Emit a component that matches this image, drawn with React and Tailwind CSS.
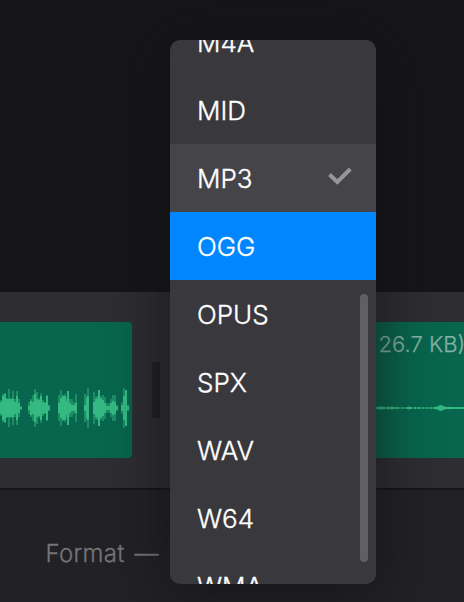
const formats = ["M4A", "MID", "MP3", "OGG", "OPUS", "SPX", "WAV", "W64", "WMA"];

// Each entry: x, peak half height, body half height
const speech = [
  [0, 8, 6], [2, 14, 12], [4, 15, 14], [6, 10, 9], [8, 19, 9], [10, 10, 9], [12, 17, 9], [14, 9, 6], [16, 17, 12], [18, 9, 5], [20, 2, 1],
  [28, 6, 2], [30, 9, 7], [32, 13, 6], [34, 19, 14], [36, 16, 9], [38, 10, 8], [40, 15, 12], [42, 8, 6], [44, 6, 5], [46, 13, 12], [48, 3, 2],
  [58, 13, 5], [60, 18, 10], [62, 13, 12], [64, 14, 12], [66, 11, 7], [67, 17, 17], [69, 9, 5], [71, 9, 3], [73, 6, 3], [75, 14, 5],
  [84, 14, 3], [86, 12, 10], [87, 20, 12], [93, 16, 6], [95, 12, 9], [97, 12, 11], [98, 18, 18], [100, 12, 10], [102, 13, 8], [104, 11, 5], [106, 5, 2],
  [108, 5, 2], [110, 9, 5], [112, 13, 7], [114, 13, 6], [116, 3, 2], [121, 6, 3], [123, 20, 12], [125, 18, 18], [127, 3, 2],
];

const quiet = [
  [0, 1, 1], [2, 2, 1], [4, 2, 1], [6, 2, 1], [8, 1, 1], [11, 2, 1], [13, 1, 1], [15, 2, 1], [17, 1, 1], [19, 1, 1], [21, 1, 1],
  [26, 1, 0.5], [30, 1, 1], [32, 2, 1], [34, 1, 1], [38, 1, 1], [42, 1, 1], [46, 1, 0.5], [50, 1, 0.5], [54, 1, 0.5], [58, 1, 1],
  [60, 2, 1], [62, 3, 2], [64, 3, 3], [66, 2, 2], [68, 2, 1], [70, 1, 1], [72, 1.5, 1], [74, 1, 1], [76, 1, 1], [78, 1, 1], [80, 1, 1], [82, 1, 1], [84, 1, 1], [86, 1, 1],
];

function Wave({ bars, line }) {
  return (
    <svg className="block h-10 w-full" fill="none">
      {line && <rect x="0" y="19" width="88" height="2" fill="#1c8c64" />}
      {bars.map(([x, peak], i) => (
        <rect key={i} x={x} y={20 - peak} width="2" height={peak * 2} fill="#1c8c64" />
      ))}
      {bars.map(([x, , body], i) => (
        <rect key={i} x={x} y={20 - body} width="2" height={body * 2} fill="#34b983" />
      ))}
    </svg>
  );
}

function Track() {
  return (
    <div className="flex h-[196px] items-start bg-[#2e2d32] pt-[30px]">
      <div className="h-[136px] w-[132px] rounded-r-[4px] bg-[#08664e] pt-[66px]">
        <Wave bars={speech} />
      </div>
      <div className="mt-10 ml-5 h-14 w-2 bg-[#202024]" />
      <div className="ml-5 h-[136px] flex-1 overflow-hidden bg-[#08664e]">
        <div className="ml-[198.5px] h-[66px] pt-2 text-[22px] leading-[28px] font-light whitespace-nowrap text-[#84b3a5] [-webkit-text-stroke:0.25px_#84b3a5]">
          26.7 KB)
        </div>
        <div className="ml-[196px]">
          <Wave bars={quiet} line />
        </div>
      </div>
    </div>
  );
}

function FormatMenu() {
  return (
    <div className="absolute top-10 left-[170px] h-[544px] w-[206px] overflow-hidden rounded-[10px] bg-[#39383c]">
      <ul className="-mt-8">
        {formats.map((name) => (
          <li
            key={name}
            className={
              "flex h-[68px] items-center justify-between pr-6 pl-[27px] text-[26px] font-light text-white [-webkit-text-stroke:0.35px_white] " +
              (name === "MP3" ? "bg-[#454448]" : name === "OGG" ? "bg-[#0087ff]" : "")
            }
          >
            <span>{name}</span>
            {name === "MP3" && (
              <svg className="mb-1 h-[18px] w-6" viewBox="0 0 24 18" fill="none" stroke="#979797" strokeWidth="4">
                <path d="M1.5 7.5 9.3 15 22.3 2" />
              </svg>
            )}
          </li>
        ))}
      </ul>
      <div className="absolute top-[254px] right-2 h-[268px] w-2 rounded-full bg-[#606062]" />
    </div>
  );
}

export default function App() {
  return (
    <div className="relative flex h-[602px] w-[464px] flex-col overflow-hidden bg-[#16151a] font-['Inter',sans-serif]">
      <div className="h-[292px]" />
      <Track />
      <div className="h-0.5 bg-[#161519]" />
      <div className="flex flex-1 gap-[10px] bg-[#222126] pt-[48px] pl-[45.5px] text-[24px] leading-[32px] font-light text-[#757577] [-webkit-text-stroke:0.3px_#757577]">
        <span className="tracking-[0.25px]">Format</span>
        <span>—</span>
      </div>
      <div className="absolute top-10 left-[170px] h-[544px] w-[206px] rounded-[10px] shadow-[0_8px_60px_rgba(16,16,16,0.7)]" />
      <FormatMenu />
    </div>
  );
}
